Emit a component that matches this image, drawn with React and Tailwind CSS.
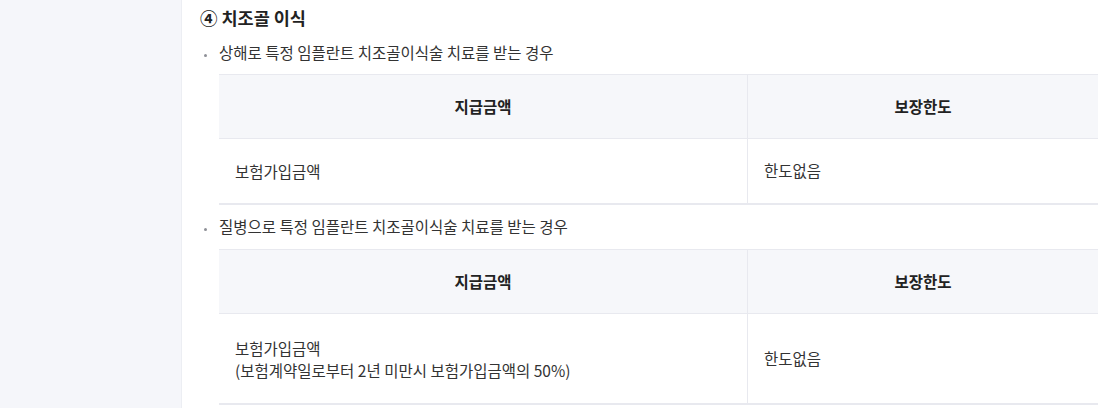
import React from 'react';

const font = { fontFamily: '"Noto Sans CJK KR", "Noto Sans", sans-serif' };

const Bullet = ({ children, className = '' }) => (
  <div className={`flex items-center text-[15.5px] leading-[22px] text-[#333] ${className}`}>
    <span className="ml-[4px] mr-[12px] mt-[6px] w-[3px] h-[3px] rounded-full bg-[#8e9097]" />
    <span>{children}</span>
  </div>
);

const CoverageTable = ({ amount, tall }) => (
  <div className="ml-[19px] w-[879px] text-[15.5px]">
    <div className="grid grid-cols-[529px_1fr] h-[65px] bg-[#f6f7fa] border-t border-b border-[#e8e9ef] font-bold text-[#222]">
      <div className="flex items-center justify-center border-r border-[#e8e9ef]">지급금액</div>
      <div className="flex items-center justify-center">보장한도</div>
    </div>
    <div className={`grid grid-cols-[529px_1fr] border-b-2 border-[#e8e9ef] text-[#333] ${tall ? 'h-[91px]' : 'h-[66px]'}`}>
      <div className="flex flex-col justify-center px-4 leading-[22px] border-r border-[#e8e9ef]">{amount}</div>
      <div className="flex items-center px-4">한도없음</div>
    </div>
  </div>
);

export default function App() {
  return (
    <div className="flex min-h-[408px] bg-white overflow-hidden" style={font}>
      <aside className="w-[182px] shrink-0 bg-[#f5f6fa] border-r border-[#eceef3]" />
      <main className="flex-1 pl-[18px] pt-[6px]">
        <h3 className="text-[17.5px] leading-[24px] font-bold text-[#222]">④ 치조골 이식</h3>
        <Bullet className="mt-[11px]">상해로 특정 임플란트 치조골이식술 치료를 받는 경우</Bullet>
        <div className="mt-[11px]">
          <CoverageTable amount={<span>보험가입금액</span>} />
        </div>
        <Bullet className="mt-[10px]">질병으로 특정 임플란트 치조골이식술 치료를 받는 경우</Bullet>
        <div className="mt-[12px]">
          <CoverageTable
            tall
            amount={
              <>
                <span>보험가입금액</span>
                <span>(보험계약일로부터 2년 미만시 보험가입금액의 50%)</span>
              </>
            }
          />
        </div>
      </main>
    </div>
  );
}
